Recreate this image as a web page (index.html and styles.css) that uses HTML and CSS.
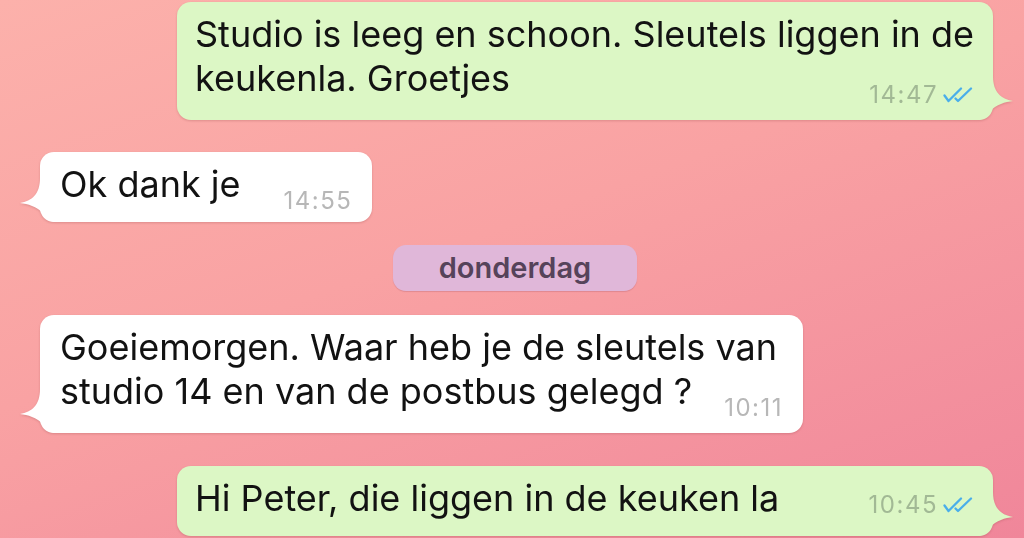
FILE: index.html
```html
<!DOCTYPE html>
<html lang="nl">
<head>
<meta charset="utf-8">
<title>Chat</title>
<link rel="stylesheet" href="styles.css">
</head>
<body>
<main class="chat">
  <div class="bubble out wide multi">
    Studio is leeg en schoon. Sleutels liggen in de keukenla. Groetjes
    <span class="meta"><span class="time">14:47</span><svg class="ticks" viewBox="0 0 32 16" width="32" height="16"><path d="M1.5 8.5 L5.5 14 L18 1.5 M12.5 11.5 L15 14 L28 1.5" fill="none" stroke="#4aaeea" stroke-width="2.3" stroke-linecap="round" stroke-linejoin="round"/></svg></span>
    <svg class="tail" viewBox="0 0 34 44" width="34" height="44"><path d="M14 0 C14 16 22 23 34 25 C26 26 18 28 10 36 C7 40 4 43 0 44 L0 0 Z"/></svg>
  </div>

  <div class="bubble in short">
    Ok dank je
    <span class="meta"><span class="time">14:55</span></span>
    <svg class="tail" viewBox="0 0 34 44" width="34" height="44"><path d="M20 0 C20 16 12 23 0 25 C8 26 16 28 24 36 C27 40 30 43 34 44 L34 0 Z"/></svg>
  </div>

  <div class="day">donderdag</div>

  <div class="bubble in mid multi">
    Goeiemorgen. Waar heb je de sleutels van studio 14 en van de postbus gelegd ?
    <span class="meta"><span class="time">10:11</span></span>
    <svg class="tail" viewBox="0 0 34 44" width="34" height="44"><path d="M20 0 C20 16 12 23 0 25 C8 26 16 28 24 36 C27 40 30 43 34 44 L34 0 Z"/></svg>
  </div>

  <div class="bubble out wide last">
    Hi Peter, die liggen in de keuken la
    <span class="meta"><span class="time">10:45</span><svg class="ticks" viewBox="0 0 32 16" width="32" height="16"><path d="M1.5 8.5 L5.5 14 L18 1.5 M12.5 11.5 L15 14 L28 1.5" fill="none" stroke="#4aaeea" stroke-width="2.3" stroke-linecap="round" stroke-linejoin="round"/></svg></span>
    <svg class="tail" viewBox="0 0 34 44" width="34" height="44"><path d="M14 0 C14 16 22 23 34 25 C26 26 18 28 10 36 C7 40 4 43 0 44 L0 0 Z"/></svg>
  </div>
</main>
</body>
</html>
```

FILE: styles.css
```css
html, body {
  margin: 0;
  padding: 0;
  height: 100%;
  overflow: hidden;
}

body {
  background: linear-gradient(160deg, #fcb1ab 0%, #f9a2a3 45%, #f0869a 100%);
  font-family: "Inter", "Noto Sans", sans-serif;
  color: #121212;
}

.chat {
  display: flex;
  flex-direction: column;
  padding: 2px 31px 0 40px;
}

.bubble {
  position: relative;
  box-sizing: border-box;
  font-size: 36px;
  line-height: 44px;
  padding: 10px 20px 16px 20px;
  border-radius: 14px;
  filter: drop-shadow(0 1px 1px rgba(120, 40, 40, 0.22));
  display: flow-root;
}

.bubble.multi {
  padding-bottom: 20px;
}

.bubble.out {
  align-self: flex-end;
  background: #dcf7c5;
  padding-left: 18px;
  padding-right: 18px;
}

.bubble.in {
  align-self: flex-start;
  background: #ffffff;
}

.bubble.wide {
  width: 816px;
}

.bubble.mid {
  width: 763px;
  margin-top: 24px;
}

.bubble.short {
  margin-top: 32px;
}

.bubble.last {
  margin-top: 33px;
}

.meta {
  float: right;
  display: flex;
  align-items: center;
  gap: 5px;
  margin-left: 20px;
  position: relative;
  top: 27px;
}

.short .meta {
  margin-left: 43px;
}

.last .meta {
  top: 17px;
}

.time {
  font-size: 24px;
  letter-spacing: 1.5px;
  line-height: 24px;
}

.out .time {
  color: #a2b995;
}

.in .time {
  color: #b7b7b7;
}

.ticks {
  display: block;
}

.tail {
  position: absolute;
  bottom: 0;
}

.out .tail {
  right: -20px;
  fill: #dcf7c5;
}

.in .tail {
  left: -20px;
  fill: #ffffff;
}

.day {
  align-self: center;
  margin: 23px 3px 0 0;
  width: 244px;
  height: 46px;
  box-sizing: border-box;
  border-radius: 13px;
  background: #e0b7d9;
  color: #56435a;
  font-size: 29px;
  font-weight: 600;
  line-height: 46px;
  text-align: center;
  box-shadow: 0 1px 1px rgba(120, 40, 60, 0.18);
}
```
